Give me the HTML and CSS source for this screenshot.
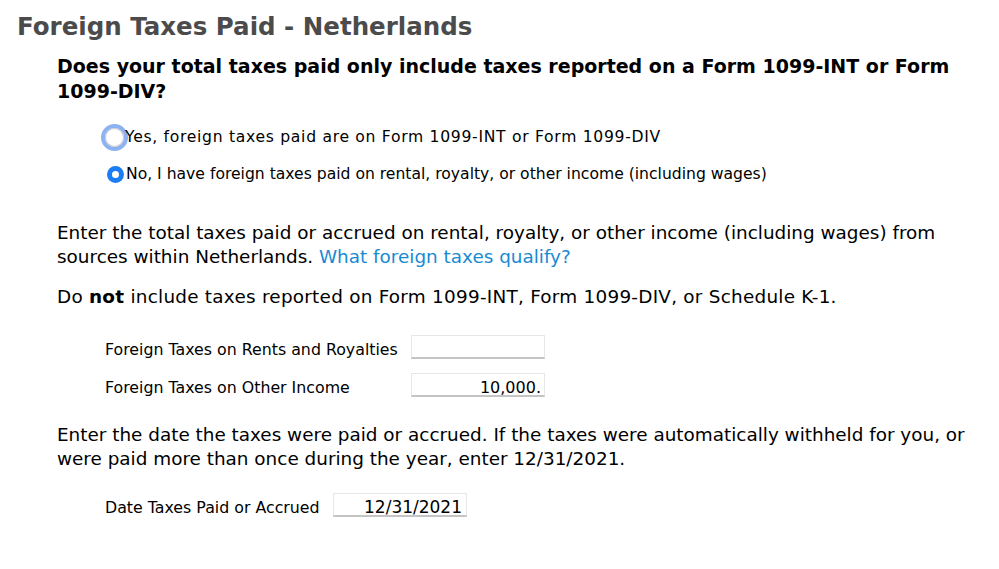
FILE: index.html
```html
<!DOCTYPE html>
<html>
<head>
<meta charset="utf-8">
<link rel="stylesheet" href="styles.css">
</head>
<body>
<div class="page">
  <h1 class="title">Foreign Taxes Paid - Netherlands</h1>
  <div class="content">
    <h2 class="question">Does your total taxes paid only include taxes reported on a Form 1099-INT or Form 1099-DIV?</h2>
    <div class="options">
      <div class="option">
        <span class="radio radio-focus"><span class="radio-inner"></span></span>
        <span class="option-text first">Yes, foreign taxes paid are on Form 1099-INT or Form 1099-DIV</span>
      </div>
      <div class="option">
        <span class="radio radio-on"></span>
        <span class="option-text">No, I have foreign taxes paid on rental, royalty, or other income (including wages)</span>
      </div>
    </div>
    <p class="para p1">Enter the total taxes paid or accrued on rental, royalty, or other income (including wages) from sources within Netherlands. <a class="link">What foreign taxes qualify?</a></p>
    <p class="para p2">Do <b>not</b> include taxes reported on Form 1099-INT, Form 1099-DIV, or Schedule K-1.</p>
    <div class="fields">
      <div class="field-row">
        <span class="label w1">Foreign Taxes on Rents and Royalties</span>
        <span class="input"></span>
      </div>
      <div class="field-row">
        <span class="label w1">Foreign Taxes on Other Income</span>
        <span class="input">10,000.</span>
      </div>
    </div>
    <p class="para p3">Enter the date the taxes were paid or accrued. If the taxes were automatically withheld for you, or were paid more than once during the year, enter 12/31/2021.</p>
    <div class="fields f2">
      <div class="field-row">
        <span class="label w2">Date Taxes Paid or Accrued</span>
        <span class="input date">12/31/2021</span>
      </div>
    </div>
  </div>
</div>
</body>
</html>
```
FILE: styles.css
```css
html, body {
  margin: 0;
  padding: 0;
  background: #ffffff;
}
body {
  font-family: "DejaVu Sans", "Liberation Sans", sans-serif;
  color: #000;
  width: 999px;
  height: 569px;
  overflow: hidden;
}
.page {
  padding: 11px 0 0 17px;
}
.title {
  margin: 0;
  font-size: 24.5px;
  line-height: 32px;
  font-weight: bold;
  color: #4b4b4b;
}
.content {
  padding-left: 40px;
}
.question {
  margin: 11px 0 0 0;
  font-size: 19px;
  line-height: 25px;
  font-weight: bold;
  width: 900px;
}
.options {
  margin-top: 22px;
  padding-left: 44px;
  display: flex;
  flex-direction: column;
  gap: 15px;
}
.option {
  display: flex;
  align-items: center;
  height: 22px;
  font-size: 15.6px;
}
.radio {
  box-sizing: border-box;
  display: inline-flex;
  align-items: center;
  justify-content: center;
  border-radius: 50%;
  flex: none;
}
.radio-focus {
  width: 27px;
  height: 27px;
  background: #8db2f2;
}
.radio-inner {
  width: 19px;
  height: 19px;
  border-radius: 50%;
  background: #ffffff;
  box-shadow: inset 0 0 0 1px #c9c9c9;
}
.radio-on {
  width: 17px;
  height: 17px;
  margin-left: 6px;
  margin-right: 2px;
  border: 5px solid #1b7cf4;
  background: #fff;
}
.option-text.first {
  margin-left: -3px;
  letter-spacing: 0.7px;
}
.para {
  margin: 0;
  font-size: 18.4px;
  line-height: 24px;
  width: 910px;
}
.p1 { margin-top: 36px; }
.p2 { margin-top: 16px; letter-spacing: 0.25px; }
.p3 { margin-top: 26px; }
.link {
  color: #1a8ad2;
  cursor: pointer;
}
.fields {
  margin-top: 26px;
  padding-left: 48px;
  display: flex;
  flex-direction: column;
  gap: 14px;
}
.f2 { margin-top: 22px; }
.field-row {
  display: flex;
  align-items: center;
  height: 24px;
  font-size: 15.8px;
}
.label {
  padding-top: 4px;
}
.label.w1 { width: 306px; }
.label.w2 { width: 228px; }
.input {
  box-sizing: border-box;
  width: 134px;
  height: 24px;
  border: 1px solid #e6e6e6;
  border-bottom: 2px solid #c4c4c4;
  background: #fff;
  text-align: right;
  padding: 4px 3px 0 0;
  font-size: 16px;
  line-height: 19px;
}
.input.date {
  font-size: 17px;
  padding-right: 4px;
}
```
